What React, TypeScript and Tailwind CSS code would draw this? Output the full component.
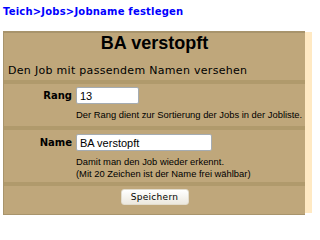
import React from "react";

const verdana = { fontFamily: '"DejaVu Sans", Verdana, sans-serif' };
const arial = { fontFamily: '"Liberation Sans", Arial, sans-serif' };

function Band() {
  return <div className="h-[4px] bg-[#b09a6c]" />;
}

function FieldRow({
  label,
  value,
  inputWidth,
  help,
}: {
  label: string;
  value: string;
  inputWidth: string;
  help: string[];
}) {
  return (
    <div className="flex pt-[3px]">
      <div className="flex h-[17px] w-[68px] items-center justify-end">
        <span className="text-[10px] font-bold text-black" style={verdana}>
          {label}
        </span>
      </div>
      <div className="ml-[4px] flex flex-col">
        <input
          readOnly
          value={value}
          className={`h-[17px] ${inputWidth} rounded-[2px] border border-[#a5acb2] bg-white px-[3px] text-[11px] text-black outline-none`}
          style={arial}
        />
        <div className="mt-[5px] text-[9.4px] leading-[12px] text-black" style={arial}>
          {help.map((line) => (
            <div key={line}>{line}</div>
          ))}
        </div>
      </div>
    </div>
  );
}

export default function App() {
  return (
    <div className="h-[218px] w-[312px] overflow-hidden bg-white">
      <div className="px-[3px] pt-[5px] text-[10px] font-bold leading-[13px] tracking-[0.2px] text-[#0000ff]" style={verdana}>
        <a href="#">Teich</a>&gt;<a href="#">Jobs</a>&gt;<a href="#">Jobname festlegen</a>
      </div>
      <div className="mt-[13px] flex">
        <div className="ml-[3px] w-[302px] shrink-0 border-t-2 border-b border-l border-[#a8946c] bg-[#bfa77b]">
          <div className="h-[31px] text-center text-[18px] font-bold leading-[21px] text-black" style={arial}>
            BA verstopft
          </div>
          <div className="h-[16px] pl-[4px] text-[11px] leading-[13px] tracking-[0.3px] text-black" style={verdana}>
            Den Job mit passendem Namen versehen
          </div>
          <Band />
          <div className="pb-[5px]">
            <FieldRow
              label="Rang"
              value="13"
              inputWidth="w-[63px]"
              help={["Der Rang dient zur Sortierung der Jobs in der Jobliste."]}
            />
          </div>
          <Band />
          <div className="pb-[2px] pt-[1px]">
            <FieldRow
              label="Name"
              value="BA verstopft"
              inputWidth="w-[136px]"
              help={["Damit man den Job wieder erkennt.", "(Mit 20 Zeichen ist der Name frei wählbar)"]}
            />
          </div>
          <Band />
          <div className="flex justify-center pb-[9px] pt-[3px]">
            <button
              type="button"
              className="h-[16px] w-[68px] rounded-[3px] border border-[#e2dccd] bg-gradient-to-b from-white to-[#ece8de] text-[9px] leading-[14px] tracking-[0.3px] text-black"
              style={verdana}
            >
              Speichern
            </button>
          </div>
        </div>
        <div className="mb-[2px] mt-[1px] flex-1 bg-[#ffe9c3]" />
      </div>
    </div>
  );
}
